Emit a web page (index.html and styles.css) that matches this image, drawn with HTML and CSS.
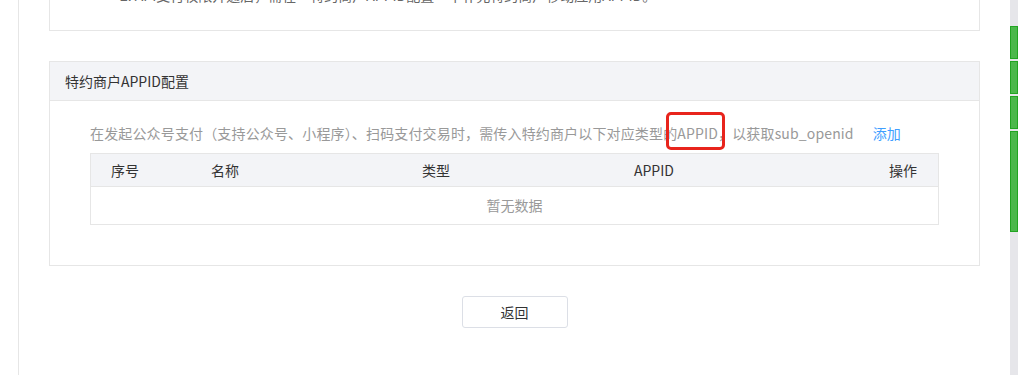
FILE: index.html
```html
<!DOCTYPE html>
<html lang="zh-CN">
<head>
<meta charset="utf-8">
<title>特约商户APPID配置</title>
<link rel="stylesheet" href="styles.css">
</head>
<body>
<div class="page">
  <main class="main">
    <div class="content">
      <div class="notice">
        <p class="notice-line">1. 特约商户需开通对应的支付权限后，方可使用相应的支付能力。</p>
        <p class="notice-line">2. API支付权限开通后，需在“特约商户APPID配置”中补充特约商户移动应用APPID。</p>
      </div>

      <section class="panel">
        <div class="panel-head">特约商户APPID配置</div>
        <div class="panel-body">
          <p class="desc">在发起公众号支付（支持公众号、小程序）、扫码支付交易时，需传入特约商户以下对应类型的<span class="mark">APPID</span>，以获取sub_openid<a class="add" href="#">添加</a></p>
          <div class="table">
            <div class="row head">
              <div class="cell">序号</div>
              <div class="cell">名称</div>
              <div class="cell">类型</div>
              <div class="cell">APPID</div>
              <div class="cell end">操作</div>
            </div>
            <div class="empty">暂无数据</div>
          </div>
        </div>
      </section>

      <div class="actions">
        <button class="btn" type="button">返回</button>
      </div>
    </div>
  </main>
  <div class="scrollbar">
    <div class="seg s1"></div>
    <div class="seg s2"></div>
    <div class="seg s3"></div>
    <div class="seg s4"></div>
  </div>
</div>
</body>
</html>
```

FILE: styles.css
```css
* { box-sizing: border-box; }
html, body {
  margin: 0;
  padding: 0;
  background: #fff;
  font-family: "Noto Sans CJK SC", "Noto Sans", sans-serif;
  font-size: 14px;
  color: #333;
}
.page {
  display: flex;
  width: 1018px;
  height: 375px;
  overflow: hidden;
}
.main {
  flex: 1;
  padding-left: 18px;
}
.content {
  display: flow-root;
  height: 100%;
  border-left: 1px solid #e6e6e6;
  padding: 0 30px 0 30px;
}
.notice {
  margin-top: -35px;
  border: 1px solid #e6e6e6;
  border-top: none;
  padding: 0 0 25px 70px;
}
.notice-line {
  margin: 0;
  line-height: 20px;
  color: #666;
  font-size: 14px;
}
.panel {
  margin-top: 30px;
  border: 1px solid #e6e6e6;
}
.panel-head {
  height: 39px;
  line-height: 38px;
  background: #f3f4f7;
  border-bottom: 1px solid #e6e6e6;
  padding-left: 15px;
  color: #333;
}
.panel-body {
  padding: 22px 40px 40px 40px;
}
.desc {
  margin: 0 0 10px 0;
  line-height: 20px;
  color: #999;
  letter-spacing: 0.15px;
}
.mark {
  position: relative;
}
.mark::after {
  content: "";
  position: absolute;
  left: -11px;
  right: -7px;
  top: -11px;
  bottom: -7px;
  border: 3px solid #e8241c;
  border-radius: 5px;
}
.add {
  margin-left: 19px;
  color: #409eff;
  text-decoration: none;
  letter-spacing: 0;
}
.table {
  border: 1px solid #e6e6e6;
}
.row {
  display: grid;
  grid-template-columns: 100px 211px 212px 1fr auto;
}
.row.head {
  height: 33px;
  line-height: 32px;
  background: #f3f4f7;
  border-bottom: 1px solid #e6e6e6;
  color: #333;
}
.cell {
  padding-left: 20px;
}
.cell.end {
  padding-left: 0;
  padding-right: 21px;
}
.empty {
  height: 37px;
  line-height: 37px;
  text-align: center;
  color: #999;
}
.actions {
  display: flex;
  justify-content: center;
  width: 931px;
  margin-top: 30px;
}
.btn {
  width: 106px;
  height: 32px;
  background: #fff;
  border: 1px solid #dcdfe6;
  border-radius: 3px;
  font-family: inherit;
  font-size: 14px;
  color: #333;
  padding: 0;
}
.scrollbar {
  width: 8px;
  height: 375px;
  background: #e6e6ea;
  display: flex;
  flex-direction: column;
  padding-top: 26px;
  gap: 2px;
}
.seg {
  background: #4cb84c;
  border: 1px solid #22a522;
}
.s1 { height: 33px; }
.s2 { height: 33px; }
.s3 { height: 33px; }
.s4 { height: 101px; }
```
